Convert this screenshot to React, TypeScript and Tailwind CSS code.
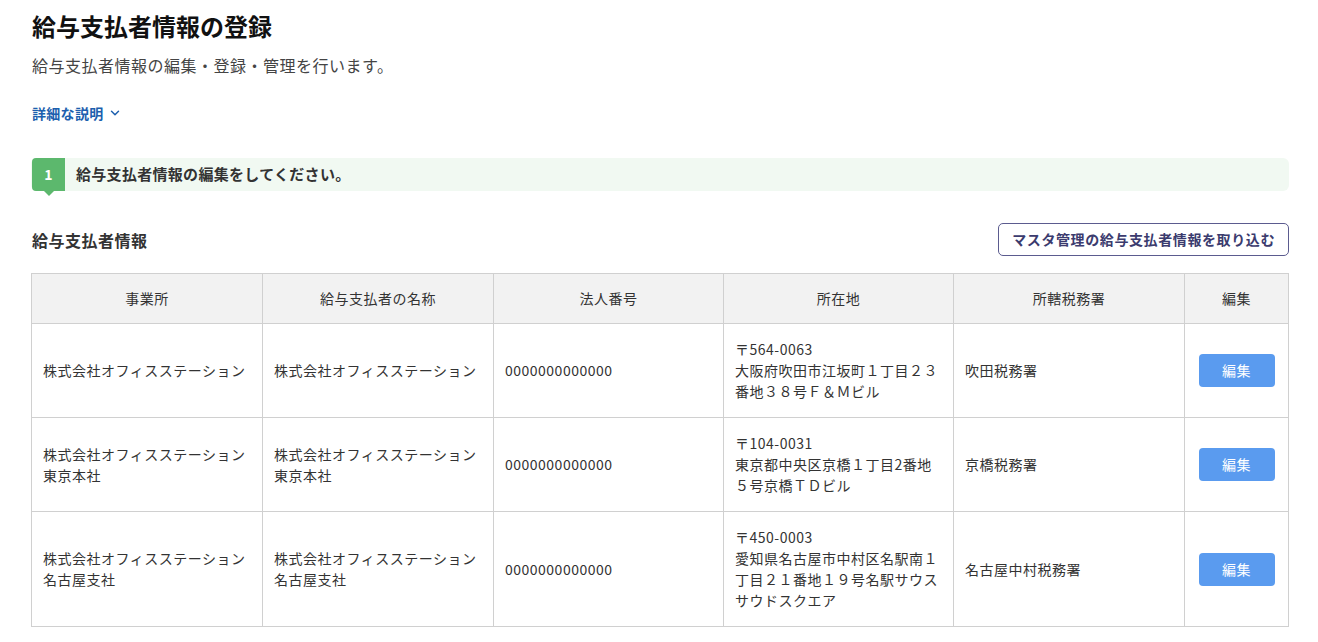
import { ChevronDown } from 'lucide-react';

const rows = [
  {
    office: ['株式会社オフィスステーション'],
    name: ['株式会社オフィスステーション'],
    corp: '0000000000000',
    addr: ['〒564-0063', '大阪府吹田市江坂町１丁目２３', '番地３８号Ｆ＆Ｍビル'],
    tax: '吹田税務署',
  },
  {
    office: ['株式会社オフィスステーション', '東京本社'],
    name: ['株式会社オフィスステーション', '東京本社'],
    corp: '0000000000000',
    addr: ['〒104-0031', '東京都中央区京橋１丁目2番地', '５号京橋ＴＤビル'],
    tax: '京橋税務署',
  },
  {
    office: ['株式会社オフィスステーション', '名古屋支社'],
    name: ['株式会社オフィスステーション', '名古屋支社'],
    corp: '0000000000000',
    addr: ['〒450-0003', '愛知県名古屋市中村区名駅南１', '丁目２１番地１９号名駅サウス', 'サウドスクエア'],
    tax: '名古屋中村税務署',
  },
];

const headers = ['事業所', '給与支払者の名称', '法人番号', '所在地', '所轄税務署', '編集'];

function Lines({ lines }: { lines: string[] }) {
  return (
    <>
      {lines.map(l => (
        <div key={l} className="whitespace-nowrap">{l}</div>
      ))}
    </>
  );
}

export default function App() {
  return (
    <div className="min-h-screen bg-white pl-[31px] pr-[29px] pt-[11px] text-[#333] font-['Noto_Sans_CJK_JP','Noto_Sans',sans-serif]">
      <h1 className="pl-px text-[24px] font-bold leading-[30px] text-[#111]">給与支払者情報の登録</h1>
      <p className="mt-[12px] pl-px text-[16px] leading-[24px] tracking-[0.5px] text-[#444]">給与支払者情報の編集・登録・管理を行います。</p>
      <button className="mt-[26px] ml-px flex items-center gap-1 text-[14px] font-bold leading-[20px] tracking-[0.3px] text-[#1c5fae]">
        詳細な説明
        <ChevronDown className="h-3.5 w-3.5" strokeWidth={2.5} />
      </button>

      {/* step */}
      <div className="mt-[35px] flex h-[33px] items-center rounded-md bg-[#f1f9f2]">
        <div className="relative ml-px flex h-[33px] w-[33px] items-center justify-center rounded-l-[4px] bg-[#5cb86d] text-[14px] font-bold text-white">
          1
          <span className="absolute -bottom-[5px] left-1/2 h-0 w-0 -translate-x-1/2 border-x-[5px] border-t-[5px] border-x-transparent border-t-[#5cb86d]" />
        </div>
        <p className="ml-[11px] text-[15px] font-bold tracking-[0.3px] text-[#333]">給与支払者情報の編集をしてください。</p>
      </div>

      {/* section header */}
      <div className="mt-[32px] flex items-center justify-between">
        <h2 className="pl-px text-[16px] font-bold tracking-[0.5px] text-[#333]">給与支払者情報</h2>
        <button className="h-[33px] rounded-[5px] border border-[#5b5b8f] bg-white px-[13px] text-[14px] font-bold tracking-[0.6px] text-[#3b3b6e]">
          マスタ管理の給与支払者情報を取り込む
        </button>
      </div>

      <table className="mt-[17px] w-full table-fixed border-collapse text-[14px] tracking-[0.5px] text-[#333]">
        <colgroup>
          <col className="w-[231px]" />
          <col className="w-[231px]" />
          <col className="w-[230px]" />
          <col className="w-[230px]" />
          <col className="w-[231px]" />
          <col />
        </colgroup>
        <thead>
          <tr className="h-[50px] bg-[#f2f2f2]">
            {headers.map(h => (
              <th key={h} className="border border-[#d0d0d0] text-center font-normal">{h}</th>
            ))}
          </tr>
        </thead>
        <tbody>
          {rows.map(r => (
            <tr key={r.addr[0]} className="leading-[21px]">
              <td className="border border-[#d0d0d0] px-[11px] py-[15px] align-middle"><Lines lines={r.office} /></td>
              <td className="border border-[#d0d0d0] px-[11px] py-[15px] align-middle"><Lines lines={r.name} /></td>
              <td className="border border-[#d0d0d0] px-[11px] py-[15px] align-middle">{r.corp}</td>
              <td className="border border-[#d0d0d0] px-[11px] py-[15px] align-middle"><Lines lines={r.addr} /></td>
              <td className="border border-[#d0d0d0] px-[11px] py-[15px] align-middle">{r.tax}</td>
              <td className="border border-[#d0d0d0] py-[15px] align-middle">
                <div className="flex justify-center">
                  <button className="h-[33px] w-[76px] rounded-[4px] bg-[#5a9bef] text-[14px] text-white">編集</button>
                </div>
              </td>
            </tr>
          ))}
        </tbody>
      </table>
    </div>
  );
}
